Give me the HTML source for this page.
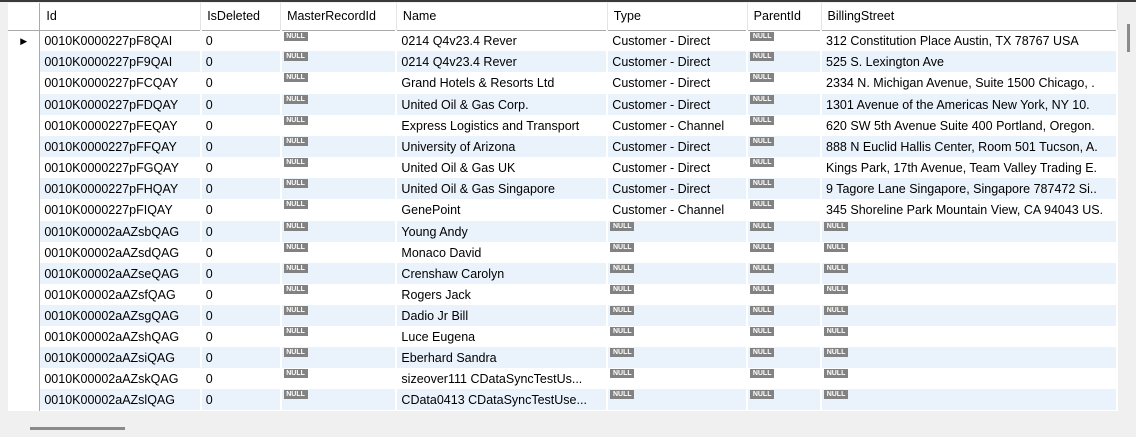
<!DOCTYPE html><html><head><style>
body{margin:0;width:1136px;height:437px;background:#f0f0f0;position:relative;overflow:hidden;font-family:"Liberation Sans",sans-serif;font-size:12px;color:#000}
#top{position:absolute;left:0;top:0;width:1136px;height:2px;background:#3a3a3a}
#grid{position:absolute;left:8px;top:3px;width:1110px;height:408px;background:#fff;overflow:hidden}
table{border-collapse:collapse;table-layout:fixed;position:absolute;left:0;top:0}
tr{height:21px}
tr.t{height:22px}
td,th{padding:0 0 0 4px;line-height:20px;box-sizing:border-box;white-space:nowrap;overflow:hidden;border-right:2px solid #fff;font-weight:normal;text-align:left;vertical-align:middle;font-size:12.5px;position:relative}
th{border-right:1px solid #e4e4e4;border-bottom:1px solid #aaa;padding-left:6px}
tr.a td{background:#eaf2fc}
td.rh{background:#fff!important;border-right:1px solid #aaa;padding:0}
th.rh{border-right:1px solid #aaa}
.n{position:absolute;left:2px;top:1px;background:#828282;color:#fff;font-size:7px;font-weight:bold;line-height:9px;height:9px;width:24px;text-align:center}
#sb{position:absolute;left:1127px;top:24px;width:3px;height:28px;background:#8a8a8a}
#hs{position:absolute;left:30px;top:427px;width:95px;height:3px;background:#8a8a8a}
</style></head><body>
<div id="top"></div>
<div id="grid"><table>
<colgroup><col style="width:32px"><col style="width:161px"><col style="width:80px"><col style="width:116px"><col style="width:211px"><col style="width:140px"><col style="width:74px"><col style="width:296px"></colgroup>
<tr style="height:27px"><th class="rh"></th><th>Id</th><th>IsDeleted</th><th>MasterRecordId</th><th>Name</th><th>Type</th><th>ParentId</th><th>BillingStreet</th></tr>
<tr><td class="rh" style="text-align:center;font-size:9px">&#9654;</td><td>0010K0000227pF8QAI</td><td>0</td><td><span class="n">NULL</span></td><td>0214 Q4v23.4 Rever</td><td>Customer - Direct</td><td><span class="n">NULL</span></td><td>312 Constitution Place Austin, TX 78767 USA</td></tr>
<tr class="a"><td class="rh"></td><td>0010K0000227pF9QAI</td><td>0</td><td><span class="n">NULL</span></td><td>0214 Q4v23.4 Rever</td><td>Customer - Direct</td><td><span class="n">NULL</span></td><td>525 S. Lexington Ave</td></tr>
<tr class="t"><td class="rh"></td><td>0010K0000227pFCQAY</td><td>0</td><td><span class="n">NULL</span></td><td>Grand Hotels &amp; Resorts Ltd</td><td>Customer - Direct</td><td><span class="n">NULL</span></td><td>2334 N. Michigan Avenue, Suite 1500 Chicago, .</td></tr>
<tr class="a"><td class="rh"></td><td>0010K0000227pFDQAY</td><td>0</td><td><span class="n">NULL</span></td><td>United Oil &amp; Gas Corp.</td><td>Customer - Direct</td><td><span class="n">NULL</span></td><td>1301 Avenue of the Americas  New York, NY 10.</td></tr>
<tr><td class="rh"></td><td>0010K0000227pFEQAY</td><td>0</td><td><span class="n">NULL</span></td><td>Express Logistics and Transport</td><td>Customer - Channel</td><td><span class="n">NULL</span></td><td>620 SW 5th Avenue Suite 400 Portland, Oregon.</td></tr>
<tr class="a"><td class="rh"></td><td>0010K0000227pFFQAY</td><td>0</td><td><span class="n">NULL</span></td><td>University of Arizona</td><td>Customer - Direct</td><td><span class="n">NULL</span></td><td>888 N Euclid  Hallis Center, Room 501 Tucson, A.</td></tr>
<tr><td class="rh"></td><td>0010K0000227pFGQAY</td><td>0</td><td><span class="n">NULL</span></td><td>United Oil &amp; Gas UK</td><td>Customer - Direct</td><td><span class="n">NULL</span></td><td>Kings Park, 17th Avenue, Team Valley Trading E.</td></tr>
<tr class="a"><td class="rh"></td><td>0010K0000227pFHQAY</td><td>0</td><td><span class="n">NULL</span></td><td>United Oil &amp; Gas Singapore</td><td>Customer - Direct</td><td><span class="n">NULL</span></td><td>9 Tagore Lane Singapore, Singapore 787472 Si..</td></tr>
<tr class="t"><td class="rh"></td><td>0010K0000227pFIQAY</td><td>0</td><td><span class="n">NULL</span></td><td>GenePoint</td><td>Customer - Channel</td><td><span class="n">NULL</span></td><td>345 Shoreline Park Mountain View, CA 94043 US.</td></tr>
<tr class="a"><td class="rh"></td><td>0010K00002aAZsbQAG</td><td>0</td><td><span class="n">NULL</span></td><td>Young Andy</td><td><span class="n">NULL</span></td><td><span class="n">NULL</span></td><td><span class="n">NULL</span></td></tr>
<tr><td class="rh"></td><td>0010K00002aAZsdQAG</td><td>0</td><td><span class="n">NULL</span></td><td>Monaco David</td><td><span class="n">NULL</span></td><td><span class="n">NULL</span></td><td><span class="n">NULL</span></td></tr>
<tr class="a"><td class="rh"></td><td>0010K00002aAZseQAG</td><td>0</td><td><span class="n">NULL</span></td><td>Crenshaw Carolyn</td><td><span class="n">NULL</span></td><td><span class="n">NULL</span></td><td><span class="n">NULL</span></td></tr>
<tr><td class="rh"></td><td>0010K00002aAZsfQAG</td><td>0</td><td><span class="n">NULL</span></td><td>Rogers Jack</td><td><span class="n">NULL</span></td><td><span class="n">NULL</span></td><td><span class="n">NULL</span></td></tr>
<tr class="a"><td class="rh"></td><td>0010K00002aAZsgQAG</td><td>0</td><td><span class="n">NULL</span></td><td>Dadio Jr Bill</td><td><span class="n">NULL</span></td><td><span class="n">NULL</span></td><td><span class="n">NULL</span></td></tr>
<tr><td class="rh"></td><td>0010K00002aAZshQAG</td><td>0</td><td><span class="n">NULL</span></td><td>Luce Eugena</td><td><span class="n">NULL</span></td><td><span class="n">NULL</span></td><td><span class="n">NULL</span></td></tr>
<tr class="a"><td class="rh"></td><td>0010K00002aAZsiQAG</td><td>0</td><td><span class="n">NULL</span></td><td>Eberhard Sandra</td><td><span class="n">NULL</span></td><td><span class="n">NULL</span></td><td><span class="n">NULL</span></td></tr>
<tr><td class="rh"></td><td>0010K00002aAZskQAG</td><td>0</td><td><span class="n">NULL</span></td><td>sizeover111 CDataSyncTestUs...</td><td><span class="n">NULL</span></td><td><span class="n">NULL</span></td><td><span class="n">NULL</span></td></tr>
<tr class="a"><td class="rh"></td><td>0010K00002aAZslQAG</td><td>0</td><td><span class="n">NULL</span></td><td>CData0413 CDataSyncTestUse...</td><td><span class="n">NULL</span></td><td><span class="n">NULL</span></td><td><span class="n">NULL</span></td></tr>
<tr><td class="rh"></td><td></td><td></td><td><span class="n">NULL</span></td><td></td><td><span class="n">NULL</span></td><td><span class="n">NULL</span></td><td><span class="n">NULL</span></td></tr>
</table></div>
<div id="sb"></div>
<div id="hs"></div>
</body></html>
